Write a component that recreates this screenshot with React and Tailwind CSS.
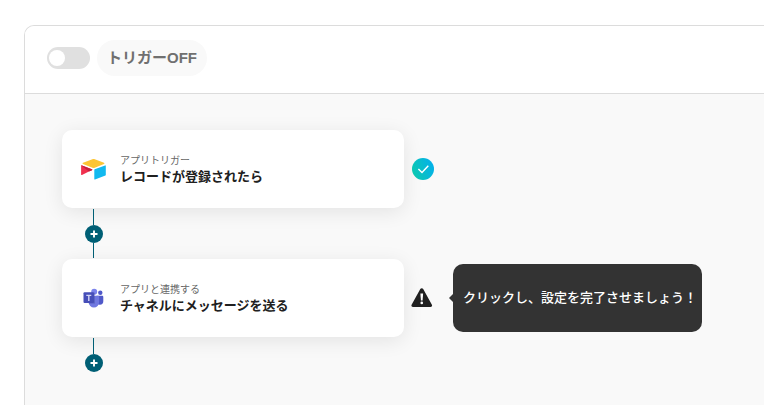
import React, { useState } from 'react';

const AirtableIcon = () => (
  <svg className="w-[26px] h-[22px]" viewBox="0 0 26 22" aria-hidden="true">
    <path d="M12.400 1.200 3 4.800c-.6.2-.6 1 0 1.200l9.400 3.700c.8.3 1.600.3 2.400 0L24 6c.5-.2.500-1 0-1.200l-9.200-3.600c-.8-.3-1.600-.3-2.400 0Z" fill="#fcc536" />
    <path d="M14.300 11.900v9.100c0 .4.300.600.700.500l10.400-3.900c.3-.1.400-.3.400-.6V7.900c0-.4-.4-.6-.7-.5l-10.400 3.900c-.3.100-.4.300-.4.600Z" fill="#12b9ef" />
    <path d="m12 12.200-3.100 1.400-6.900 3.300c-.4.200-.9-.1-.9-.5V7.900c0-.2.100-.3.200-.4.200-.2.500-.2.700-.1l9.900 3.900c.5.200.6.700.1.900Z" fill="#f0304e" />
    <path d="m12 12.200-3.100 1.400L1.300 7.500c.2-.2.500-.2.700-.1l9.900 3.900c.5.200.6.700.1.900Z" fill="#c4203f" />
  </svg>
);

const TeamsIcon = () => (
  <svg className="w-[21px] h-[20px]" viewBox="0 0 21 20" aria-hidden="true">
    <circle cx="17.300" cy="4.800" r="2.200" fill="#5059c9" />
    <path d="M13.500 7.800h5.700c.6 0 1.100.5 1.100 1.100v4.400a3.400 3.400 0 0 1-6.800 0Z" fill="#5059c9" />
    <circle cx="11.200" cy="3.800" r="3" fill="#7b83eb" />
    <path d="M6.500 7.800h8.700c.5 0 .9.400.9.900v5.500a5.200 5.200 0 0 1-10.400 0V8.700c0-.5.300-.9.800-.9Z" fill="#7078e0" />
    <path d="M5.700 4.700h6.200v10.900H5.700Z" fill="#3d4596" opacity=".4" />
    <rect x=".5" y="4.300" width="10.500" height="10.700" rx="1" fill="#464eb8" />
    <path d="M3.300 6.700h5v1.300H6.500v4.900H5.100V8H3.300Z" fill="#d4d6f5" />
  </svg>
);

const CheckIcon = () => (
  <svg className="w-[22px] h-[22px]" viewBox="0 0 22 22" role="img" aria-label="設定完了">
    <defs>
      <linearGradient id="check-fill" x1="0" y1="0.700" x2="1" y2="0.300">
        <stop offset="0" stopColor="#0cc9ae" />
        <stop offset="1" stopColor="#03b0ec" />
      </linearGradient>
    </defs>
    <circle cx="11" cy="11" r="11" fill="url(#check-fill)" />
    <path d="m6.400 11 3.600 3.600 6.300-6.800" fill="none" stroke="#fff" strokeWidth="1.400" />
  </svg>
);

const WarningIcon = () => (
  <svg className="w-[22px] h-[20px]" viewBox="0 0 22 20" role="img" aria-label="未設定">
    <path d="M9.300 1a1.700 1.700 0 0 1 2.900 0l8.700 15.700c.6 1-.1 2.200-1.300 2.200H1.900c-1.200 0-1.900-1.200-1.300-2.200Z" fill="#202020" />
    <path d="M9.400 5.500h2.700l-.5 6.900H9.900Z" fill="#fff" />
    <circle cx="10.750" cy="14.900" r="1.300" fill="#fff" />
  </svg>
);

const AddButton = () => (
  <button type="button" aria-label="アクションを追加" className="w-[18px] h-[18px] rounded-full bg-[#005f75] text-white cursor-pointer">
    <svg className="w-full h-full" viewBox="0 0 18 18" aria-hidden="true">
      <path d="M9 5.500v7M5.500 9h7" stroke="currentColor" strokeWidth="1.900" />
    </svg>
  </button>
);

const StepCard = ({ icon, label, title }) => (
  <button type="button" className="flex items-center w-[342px] h-[78px] pl-[18px] pb-px rounded-[10px] bg-white text-left shadow-[0_4px_20px_rgba(0,0,0,0.09)] cursor-pointer">
    <span className="flex justify-center w-[26px] mr-[14px]">{icon}</span>
    <span>
      <span className="block text-[10px] leading-4 text-[#666666]">{label}</span>
      <span className="block text-[13px] leading-4 font-bold text-[#202020]">{title}</span>
    </span>
  </button>
);

const App = () => {
  const [enabled, setEnabled] = useState(false);

  return (
    <div className="flex flex-col min-h-screen bg-white pt-[25px] pl-6 font-['Liberation_Sans','Noto_Sans_CJK_JP',sans-serif]">
      <div className="flex flex-col flex-1 rounded-tl-[10px] border-t border-l border-[#dcdcdc] bg-[#f9f9f9] overflow-hidden">
        {/* Trigger switch */}
        <header className="h-[68px] border-b border-[#dcdcdc] bg-white pl-[22px] pb-1 flex items-center">
          <label className="flex items-center gap-[7px] cursor-pointer">
            <input
              type="checkbox"
              role="switch"
              checked={enabled}
              onChange={(e) => setEnabled(e.target.checked)}
              className="appearance-none w-[43px] h-[22px] rounded-full bg-[#e0e0e0] checked:bg-[#005f75] cursor-pointer before:content-[''] before:block before:w-4 before:h-4 before:mt-[3px] before:ml-[2px] before:rounded-full before:bg-white checked:before:ml-6"
            />
            <span className="h-9 px-[10px] rounded-full bg-[#f9f9f9] text-[15px] leading-9 font-bold text-[#707070]">
              {enabled ? 'トリガーON' : 'トリガーOFF'}
            </span>
          </label>
        </header>

        {/* Flow steps */}
        <main className="pl-[37px] pt-9">
          <div className="flex items-center gap-2">
            <StepCard icon={<AirtableIcon />} label="アプリトリガー" title="レコードが登録されたら" />
            <CheckIcon />
          </div>

          <div className="flex flex-col items-center w-[63px] pt-px pb-px">
            <div className="w-px h-4 bg-[#005f75]" />
            <AddButton />
            <div className="w-px h-[15px] bg-[#005f75]" />
          </div>

          <div className="flex items-center">
            <StepCard icon={<TeamsIcon />} label="アプリと連携する" title="チャネルにメッセージを送る" />
            <div className="flex items-center gap-5 ml-[7px]">
              <WarningIcon />
              <div role="tooltip" className="relative h-[68px] w-[249px] pl-[10px] flex items-center rounded-[10px] bg-[#333333] text-[13px] font-medium text-white whitespace-nowrap">
                <span className="absolute -left-1 top-[30px] border-y-4 border-y-transparent border-r-4 border-r-[#333333]" />
                クリックし、設定を完了させましょう！
              </div>
            </div>
          </div>

          <div className="flex flex-col items-center w-[63px] pt-px">
            <div className="w-px h-4 bg-[#005f75]" />
            <AddButton />
          </div>
        </main>
      </div>
    </div>
  );
};

export default App;
